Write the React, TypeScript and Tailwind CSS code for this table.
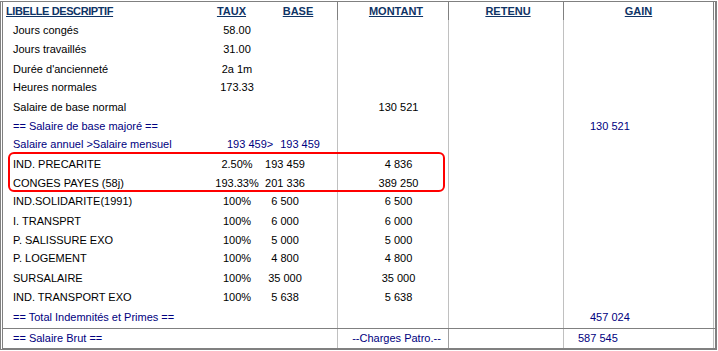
type Row = {
  label: string
  h: string
  taux?: string
  base?: string
  montant?: string
  gain?: string
  blue?: boolean
  annuel?: boolean
}

// row heights follow the uneven spacing of the original grid
const rows: Row[] = [
  { label: 'Jours congés', h: 'h-[19px]', taux: '58.00' },
  { label: 'Jours travaillés', h: 'h-[20px]', taux: '31.00' },
  { label: "Durée d'ancienneté", h: 'h-[18px]', taux: '2a 1m' },
  { label: 'Heures normales', h: 'h-[20px]', taux: '173.33' },
  { label: 'Salaire de base normal', h: 'h-[19px]', montant: '130 521' },
  { label: '== Salaire de base majoré ==', h: 'h-[18px]', blue: true, gain: '130 521' },
  { label: 'Salaire annuel >Salaire mensuel', h: 'h-[20px]', blue: true, annuel: true },
  { label: 'IND. PRECARITE', h: 'h-[19px]', taux: '2.50%', base: '193 459', montant: '4 836' },
  { label: 'CONGES PAYES (58j)', h: 'h-[18px]', taux: '193.33%', base: '201 336', montant: '389 250' },
  { label: 'IND.SOLIDARITE(1991)', h: 'h-[20px]', taux: '100%', base: '6 500', montant: '6 500' },
  { label: 'I. TRANSPRT', h: 'h-[19px]', taux: '100%', base: '6 000', montant: '6 000' },
  { label: 'P. SALISSURE EXO', h: 'h-[18px]', taux: '100%', base: '5 000', montant: '5 000' },
  { label: 'P. LOGEMENT', h: 'h-[20px]', taux: '100%', base: '4 800', montant: '4 800' },
  { label: 'SURSALAIRE', h: 'h-[19px]', taux: '100%', base: '35 000', montant: '35 000' },
  { label: 'IND. TRANSPORT EXO', h: 'h-[20px]', taux: '100%', base: '5 638', montant: '5 638' },
  { label: '== Total Indemnités et Primes ==', h: 'h-[17px]', blue: true, gain: '457 024' },
]

const head = 'font-bold underline text-[#0f3466]'

function BodyRow({ row }: { row: Row }) {
  const color = row.blue ? 'text-[#000080]' : 'text-black'
  return (
    <div className={`flex whitespace-nowrap ${row.h} ${color}`}>
      {/* libellé + taux + base */}
      <div className="flex w-[334px] pt-[5px]">
        <div className="w-[210px] pl-[10px]">{row.label}</div>
        {row.annuel ? (
          <div className="pl-[14px]">
            <span>193 459&gt;</span>
            <span className="ml-[7px]">193 459</span>
          </div>
        ) : (
          <>
            <div className="flex w-[48px] justify-center">{row.taux}</div>
            <div className="flex w-[48px] justify-center">{row.base}</div>
          </>
        )}
      </div>
      <div className="flex w-[111px] justify-center border-l border-[#c0c0c0] pl-[11px] pt-[5px]">
        {row.montant}
      </div>
      <div className="w-[115px] border-l border-[#c0c0c0]" />
      <div className="w-[151px] border-x border-[#c0c0c0] pl-[26px] pt-[5px] text-[#000080]">
        {row.gain}
      </div>
    </div>
  )
}

export default function App() {
  return (
    <div className="bg-white pt-[1px] font-['Liberation_Sans',Arial,sans-serif] text-[11px] leading-[11px]">
      <div className="relative w-[717px] border-t border-b-2 border-r-2 border-l-[3px] border-[#808080] [border-left-style:double]">
        {/* Header */}
        <div className="flex h-[18px] whitespace-nowrap">
          <div className="flex w-[334px] items-center">
            <div className={`w-[208px] pl-[3px] tracking-[-0.4px] ${head}`}>LIBELLE DESCRIPTIF</div>
            <div className={`flex w-[41px] justify-center ${head}`}>TAUX</div>
            <div className={`flex w-[85px] justify-center pl-[7px] ${head}`}>BASE</div>
          </div>
          <div className={`flex w-[111px] items-center justify-center border-l border-[#808080] pl-[6px] ${head}`}>
            MONTANT
          </div>
          <div className={`flex w-[115px] items-center justify-center border-l border-[#808080] pl-[4px] ${head}`}>
            RETENU
          </div>
          <div className={`flex w-[151px] items-center justify-center border-x border-[#808080] ${head}`}>
            GAIN
          </div>
        </div>

        {rows.map((row) => (
          <BodyRow key={row.label} row={row} />
        ))}

        {/* spacer */}
        <div className="flex h-[4px]">
          <div className="w-[334px]" />
          <div className="w-[111px] border-l border-[#c0c0c0]" />
          <div className="w-[115px] border-l border-[#c0c0c0]" />
          <div className="w-[151px] border-x border-[#c0c0c0]" />
        </div>

        {/* Salaire brut */}
        <div className="flex h-[20px] whitespace-nowrap border-t border-[#808080] text-[#000080]">
          <div className="flex w-[334px] items-center pl-[10px]">== Salaire Brut ==</div>
          <div className="flex w-[111px] items-center justify-center border-l border-[#c0c0c0] pl-[7px]">
            --Charges Patro.--
          </div>
          <div className="w-[115px] border-l border-[#a0a0a0]" />
          <div className="flex w-[151px] items-center border-x border-[#c0c0c0] pl-[14px]">587 545</div>
        </div>

        {/* red highlight around the two lines */}
        <div className="absolute left-[5px] top-[150px] h-[40px] w-[437px] rounded-[6px] border-2 border-[#ff0000]" />
      </div>
    </div>
  )
}
